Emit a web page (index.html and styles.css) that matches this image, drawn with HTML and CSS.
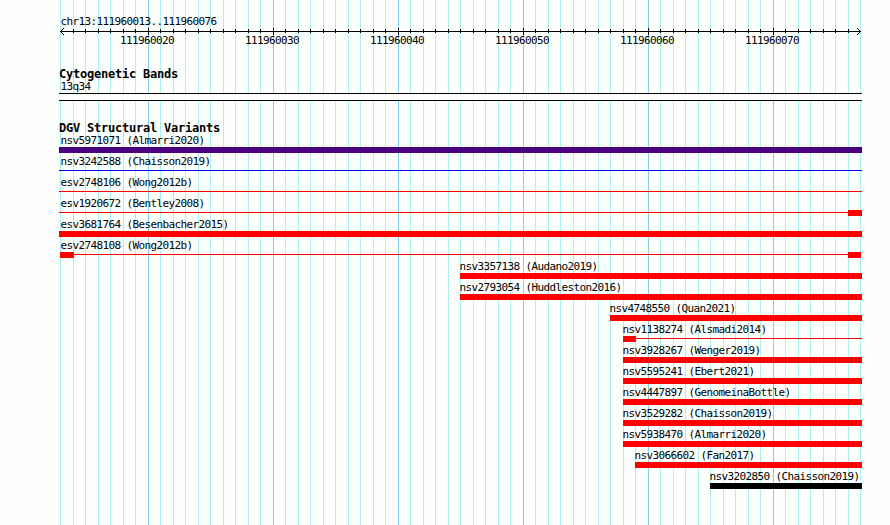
FILE: index.html
```
<!DOCTYPE html>
<html lang="en">
<head>
  <meta charset="UTF-8">
  <title>chr13:111960013..111960076</title>
  <link rel="stylesheet" href="styles.css">
</head>

<body>
  <div class="browser">
    <div class="ruler">
      <div class="region">chr13:111960013..111960076</div>
      <svg class="axis" width="803" height="8" viewBox="0 0 803 8" shape-rendering="crispEdges">
        <defs>
          <pattern id="minor" x="1" y="0" width="25" height="8" patternUnits="userSpaceOnUse">
            <rect x="0" y="2" width="1" height="4"/>
            <rect x="13" y="2" width="1" height="4"/>
          </pattern>
          <pattern id="major" x="89" y="0" width="125" height="8" patternUnits="userSpaceOnUse">
            <rect x="0" y="1" width="1" height="7"/>
          </pattern>
        </defs>
        <rect x="1" y="4" width="801" height="1"/>
        <rect x="6" y="0" width="790" height="8" fill="url(#minor)"/>
        <rect x="6" y="0" width="790" height="8" fill="url(#major)"/>
        <path d="M2 3h1v1h-1zM3 2h1v1h-1zM4 1h1v1h-1zM2 5h1v1h-1zM3 6h1v1h-1zM4 7h1v1h-1z"/>
        <path d="M800 3h1v1h-1zM799 2h1v1h-1zM798 1h1v1h-1zM800 5h1v1h-1zM799 6h1v1h-1zM798 7h1v1h-1z"/>
      </svg>
      <div class="ticks">
        <span>111960020</span>
        <span>111960030</span>
        <span>111960040</span>
        <span>111960050</span>
        <span>111960060</span>
        <span>111960070</span>
      </div>
    </div>

    <div class="track bands">
      <h2>Cytogenetic Bands</h2>
      <div class="label">13q34</div>
      <div class="band"></div>
    </div>

    <div class="track variants">
      <h2>DGV Structural Variants</h2>
      <div class="variant">
        <div class="label">nsv5971071 (Almarri2020)</div>
        <div class="bar indigo"></div>
      </div>
      <div class="variant">
        <div class="label">nsv3242588 (Chaisson2019)</div>
        <div class="bar line blue"></div>
      </div>
      <div class="variant">
        <div class="label">esv2748106 (Wong2012b)</div>
        <div class="bar line"></div>
      </div>
      <div class="variant">
        <div class="label">esv1920672 (Bentley2008)</div>
        <div class="bar line"><i class="end" style="width: 14px"></i></div>
      </div>
      <div class="variant">
        <div class="label">esv3681764 (Besenbacher2015)</div>
        <div class="bar"></div>
      </div>
      <div class="variant">
        <div class="label">esv2748108 (Wong2012b)</div>
        <div class="bar line inset"><i style="width: 14px"></i><i class="end" style="width: 13px"></i></div>
      </div>
      <div class="variant partial" style="margin-left: 401px">
        <div class="label">nsv3357138 (Audano2019)</div>
        <div class="bar"></div>
      </div>
      <div class="variant partial" style="margin-left: 401px">
        <div class="label">nsv2793054 (Huddleston2016)</div>
        <div class="bar"></div>
      </div>
      <div class="variant partial" style="margin-left: 551px">
        <div class="label">nsv4748550 (Quan2021)</div>
        <div class="bar"></div>
      </div>
      <div class="variant partial" style="margin-left: 564px">
        <div class="label">nsv1138274 (Alsmadi2014)</div>
        <div class="bar line"><i style="width: 13px"></i></div>
      </div>
      <div class="variant partial" style="margin-left: 564px">
        <div class="label">nsv3928267 (Wenger2019)</div>
        <div class="bar"></div>
      </div>
      <div class="variant partial" style="margin-left: 564px">
        <div class="label">nsv5595241 (Ebert2021)</div>
        <div class="bar"></div>
      </div>
      <div class="variant partial" style="margin-left: 564px">
        <div class="label">nsv4447897 (GenomeinaBottle)</div>
        <div class="bar"></div>
      </div>
      <div class="variant partial" style="margin-left: 564px">
        <div class="label">nsv3529282 (Chaisson2019)</div>
        <div class="bar"></div>
      </div>
      <div class="variant partial" style="margin-left: 564px">
        <div class="label">nsv5938470 (Almarri2020)</div>
        <div class="bar"></div>
      </div>
      <div class="variant partial" style="margin-left: 576px">
        <div class="label">nsv3066602 (Fan2017)</div>
        <div class="bar"></div>
      </div>
      <div class="variant partial" style="margin-left: 651px">
        <div class="label">nsv3202850 (Chaisson2019)</div>
        <div class="bar black"></div>
      </div>
    </div>
  </div>
</body>
</html>
```

FILE: styles.css
```
* {
  box-sizing: border-box;
}

body {
  margin: 0;
  background: #fdfffd;
  color: #000;
  font-family: "DejaVu Sans Mono", "Liberation Mono", monospace;
  font-size: 11px;
  line-height: 13px;
  letter-spacing: -0.622px;
  white-space: nowrap;
}

/* grid lines: one per base, a darker one every ten */
.browser {
  width: 803px;
  height: 525px;
  margin-left: 59px;
  padding-top: 15px;
  overflow: hidden;
  background-image:
    linear-gradient(90deg, #87ceeb 1px, transparent 1px),
    linear-gradient(90deg, #afeeee 1px, transparent 1px, transparent 13px, #afeeee 13px, #afeeee 14px, transparent 14px);
  background-size: 125px 100%, 25px 100%;
  background-position: 89px 0, 1px 0;
}

.region,
.label {
  height: 13px;
  padding-left: 1.4px;
}

.region {
  height: 12px;
}

.axis {
  display: block;
}

.ticks {
  display: flex;
  height: 13px;
  padding-left: 25.5px;
  line-height: 11px;
}

.ticks span {
  width: 125px;
  text-align: center;
}

h2 {
  height: 13px;
  margin: 0;
  font-size: 12px;
  font-weight: bold;
  letter-spacing: -0.224px;
}

.bands {
  margin-top: 20px;
}

.bands .label {
  height: 12px;
  line-height: 11px;
}

.band {
  height: 8px;
  border: solid #000;
  border-width: 1px 0;
  background: #fdfffd;
}

.variants {
  margin-top: 21px;
}

.variants h2 {
  height: 12px;
}

.variant {
  height: 21px;
}

.partial .label {
  padding-left: 0.4px;
  margin-left: -1px;
}

.bar {
  display: flex;
  height: 6px;
  background: #f00;
}

.bar.line {
  background: linear-gradient(#f00, #f00) 0 2px / 100% 1px no-repeat;
}

.bar.blue {
  background-image: linear-gradient(#00f, #00f);
}

.bar.indigo {
  background: #4b0082;
}

.bar.black {
  background: #000;
}

.bar.inset {
  margin: 0 1px;
}

.bar i {
  background: #f00;
}

.bar .end {
  margin-left: auto;
}
```
